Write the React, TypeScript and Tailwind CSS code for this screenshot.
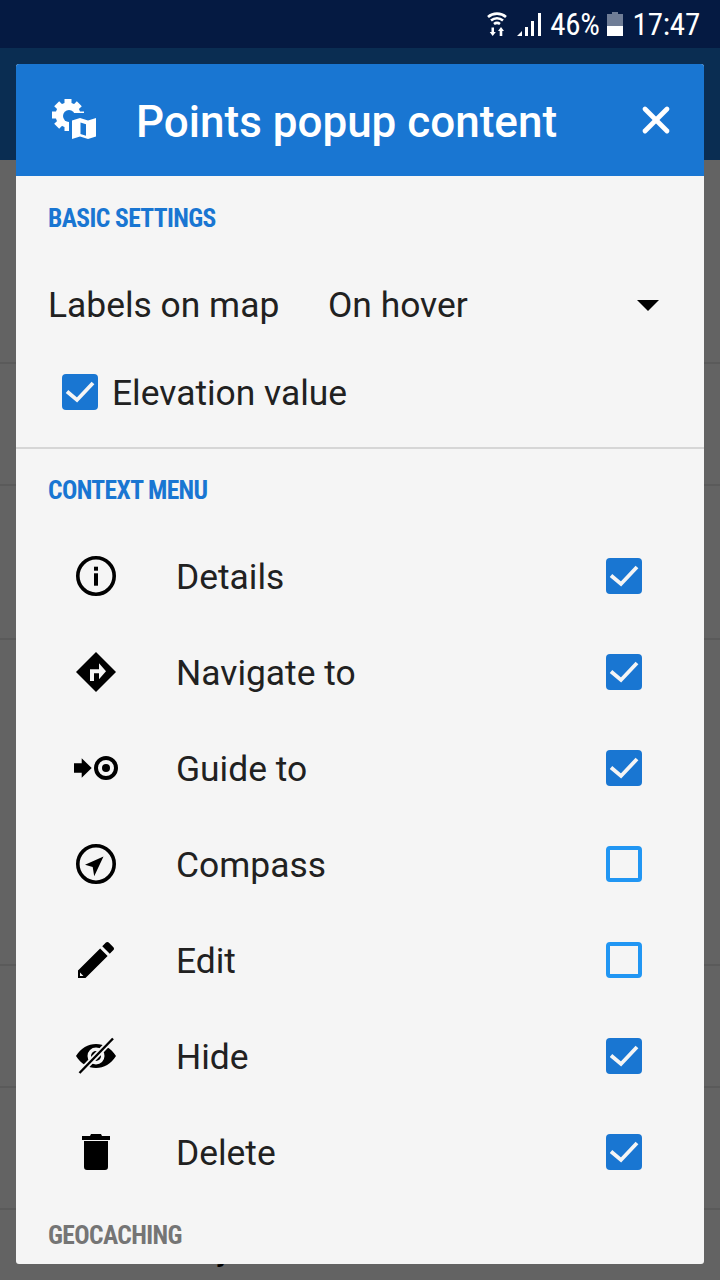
import { X } from 'lucide-react'

const bgRows = [204, 122, 154, 326, 122, 122]

const menuItems = [
  { label: 'Details', checked: true, icon: 'info' },
  { label: 'Navigate to', checked: true, icon: 'navigate' },
  { label: 'Guide to', checked: true, icon: 'guide' },
  { label: 'Compass', checked: false, icon: 'compass' },
  { label: 'Edit', checked: false, icon: 'edit' },
  { label: 'Hide', checked: true, icon: 'hide' },
  { label: 'Delete', checked: true, icon: 'delete' },
]

function MenuIcon({ name }: { name: string }) {
  return (
    <svg width="48" height="48" viewBox="0 0 48 48" className="shrink-0 text-black">
      {name === 'info' && (
        <>
          <circle cx="24" cy="24" r="18.2" fill="none" stroke="currentColor" strokeWidth="3.6" />
          <rect x="22" y="21.3" width="4" height="12.4" fill="currentColor" />
          <rect x="22" y="14.7" width="4" height="4" fill="currentColor" />
        </>
      )}
      {name === 'navigate' && (
        <path
          fillRule="evenodd"
          fill="currentColor"
          d="M24 4 44 24 24 44 4 24ZM18 33h4v-7.700h5v6l7-8-7-8v6H18Z"
        />
      )}
      {name === 'guide' && (
        <>
          <path fill="currentColor" d="M2 19.300h7.700v-5L19.700 24 9.700 33.700v-5H2Z" />
          <circle cx="34" cy="24" r="10" fill="none" stroke="currentColor" strokeWidth="4" />
          <circle cx="34" cy="24" r="4" fill="currentColor" />
        </>
      )}
      {name === 'compass' && (
        <>
          <circle cx="24" cy="24" r="18.2" fill="none" stroke="currentColor" strokeWidth="3.6" />
          <path fill="currentColor" d="M31.500 16.500 13 24.700l7.700 2.300 1.500 9.300Z" />
        </>
      )}
      {name === 'edit' && (
        <g transform="scale(2)">
          <path
            fill="currentColor"
            d="M3 17.250V21h3.750L17.810 9.940l-3.750-3.750L3 17.250zM20.710 7.040c.39-.39.39-1.020 0-1.410l-2.340-2.340c-.39-.39-1.020-.39-1.410 0l-1.830 1.830 3.750 3.750 1.830-1.830z"
          />
          <path fill="#f5f5f5" d="M4 18.300V20h1.700Z" />
        </g>
      )}
      {name === 'hide' && (
        <>
          <path
            fill="currentColor"
            fillRule="evenodd"
            d="M4 24C9 16 16 12 24 12s15 4 20 12c-5 8-12 12-20 12S9 32 4 24ZM24 15.500a8.500 8.500 0 1 0 0 17 8.500 8.500 0 0 0 0-17Z"
          />
          <circle cx="24" cy="24" r="5" fill="currentColor" />
          <path d="M41 6.500 7.500 41" stroke="#f5f5f5" strokeWidth="6" />
          <path d="M41 6.500 7.500 41" stroke="currentColor" strokeWidth="2.4" />
        </>
      )}
      {name === 'delete' && (
        <path
          fill="currentColor"
          d="M12 13h24v26c0 2-1 3-3 3H15c-2 0-3-1-3-3ZM10 8h8l1-2h10l1 2h8v4H10Z"
        />
      )}
    </svg>
  )
}

function Checkbox({ checked }: { checked: boolean }) {
  if (!checked) return <div className="h-9 w-9 shrink-0 rounded-[4px] border-4 border-[#2196f3]" />
  return (
    <div className="flex h-9 w-9 shrink-0 items-center justify-center rounded-[4px] bg-[#1976d2]">
      <svg width="36" height="36" viewBox="0 0 36 36">
        <path d="M5 17.500 15 26 31 9" fill="none" stroke="#f5f5f5" strokeWidth="3.8" />
      </svg>
    </div>
  )
}

function SectionTitle({ text, muted }: { text: string; muted?: boolean }) {
  return (
    <h2
      className={`pl-8 text-[25.500px] leading-8 font-bold tracking-[-0.6px] [font-stretch:75%] ${
        muted ? 'text-[#757575]' : 'text-[#1976d2]'
      }`}
    >
      {text}
    </h2>
  )
}

function GearMapIcon() {
  const teeth = [0, 45, 90, 135, 180, 225, 270, 315]
  return (
    <svg width="48" height="48" viewBox="0 0 48 48" className="ml-[33px] shrink-0">
      <circle cx="19" cy="19" r="12.500" fill="white" />
      {teeth.map(a => (
        <rect key={a} x="15.500" y="3" width="7" height="7" fill="white" transform={`rotate(${a} 19 19)`} />
      ))}
      <circle cx="20" cy="20" r="6" fill="#1976d2" />
      <rect x="20" y="17" width="30" height="30" fill="#1976d2" />
      <path
        fill="white"
        fillRule="evenodd"
        d="M23 24.500 31 22l8 2.500 8-2.500v18.500L39 43l-8-2.500L23 43ZM31.500 26.500v11.500l5.500 1.800V28.300Z"
      />
    </svg>
  )
}

export default function App() {
  return (
    <div className="relative flex h-[1280px] w-[720px] flex-col overflow-hidden bg-[#636363] font-['Roboto',sans-serif] text-[#212121]">
      <div className="flex h-12 shrink-0 items-center justify-end bg-[#051a42] pr-5 text-white">
        <svg width="20" height="24" viewBox="0 0 20 24" fill="none" stroke="white" className="mr-[10px]">
          <path d="M1 5C6 0.500 14 0.500 19 5" strokeWidth="2.600" />
          <path d="M4 8.500c3.500-3 8.500-3 12 0" strokeWidth="2.600" />
          <path d="M7 12c2-1.500 4-1.500 6 0" strokeWidth="2.600" />
          <path fill="white" stroke="none" d="M4.500 15.500h2.500v4.500h1.800L5.700 24 2.700 20h1.800ZM14 15l3 4h-1.700v5h-2.600v-5H11Z" />
        </svg>
        <svg width="24" height="24" viewBox="0 0 24 24" fill="white" className="mr-[9px]">
          <path d="M0 24 5 19v5ZM8 15h3v9H8ZM14 9h3v15h-3ZM21 1h3v23h-3Z" />
        </svg>
        <span className="text-[31px] leading-none tracking-[-0.3px] [font-stretch:80%]">46%</span>
        <svg width="16" height="24" viewBox="0 0 16 24" className="mr-[10px] ml-[7px]">
          <path fill="#6f7d96" d="M5 0h6v2h5v12H0V2h5Z" />
          <path fill="white" d="M0 14h16v10H0Z" />
        </svg>
        <span className="text-[31px] leading-none tracking-[-0.2px] [font-stretch:80%]">17:47</span>
      </div>
      <div className="h-28 shrink-0 bg-[#0a2d52]" />
      {bgRows.map((h, i) => (
        <div key={i} style={{ height: h }} className="shrink-0 border-b-2 border-[#5a5a5a]" />
      ))}
      <div className="pt-[21px] pl-[216px] text-[35px] leading-none text-black">y</div>

      <div className="absolute top-16 left-4 flex h-[1200px] w-[688px] flex-col overflow-hidden rounded-[3px] bg-[#f5f5f5]">
        <div className="flex h-28 shrink-0 items-center bg-[#1976d2] text-white">
          <GearMapIcon />
          <h1 className="ml-[39px] flex-1 pt-[3px] text-[44px] leading-none font-medium">Points popup content</h1>
          <X className="mr-[26px]" size={44} strokeWidth={2.6} />
        </div>

        <div className="pt-[26px]">
          <SectionTitle text="BASIC SETTINGS" />
          <div className="mt-[23px] flex h-[96px] items-center pl-8 text-[35.400px]">
            <span className="w-[280px] pt-[2px]">Labels on map</span>
            <span className="pt-[2px]">On hover</span>
            <span className="mr-[45px] ml-auto h-0 w-0 border-x-[11px] border-t-[11px] border-x-transparent border-t-black" />
          </div>
          <label className="flex h-[78px] items-center gap-[14px] pl-[46px] text-[35.400px]">
            <Checkbox checked />
            <span className="pt-[4px]">Elevation value</span>
          </label>
        </div>

        <div className="mt-4 border-t-2 border-[#d6d6d6] pt-[25px]">
          <SectionTitle text="CONTEXT MENU" />
          <div className="mt-[22px] flex flex-col">
            {menuItems.map(item => (
              <div key={item.label} className="flex h-24 items-center pr-[62px] pl-14">
                <MenuIcon name={item.icon} />
                <span className="ml-14 flex-1 pt-[4px] text-[35.400px]">{item.label}</span>
                <Checkbox checked={item.checked} />
              </div>
            ))}
          </div>
        </div>
        <div className="mt-[19px]">
          <SectionTitle text="GEOCACHING" muted />
        </div>
      </div>
    </div>
  )
}
